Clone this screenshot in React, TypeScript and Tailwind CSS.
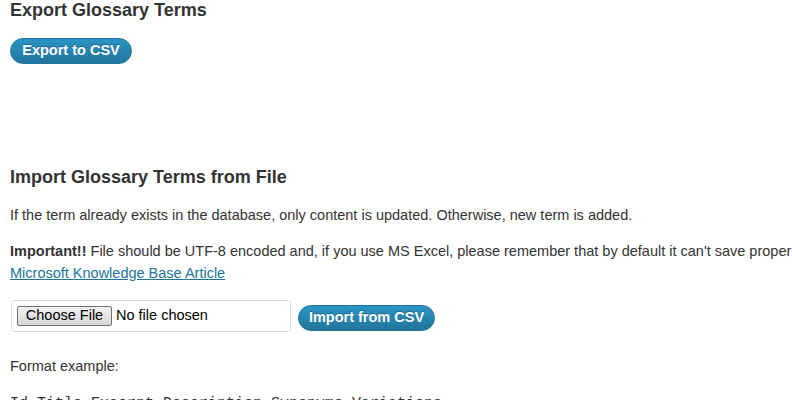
import React from "react";

export default function App() {
  return (
    <div className="w-[792px] h-[400px] overflow-hidden bg-white pl-[10px] font-['Liberation_Sans',Arial,sans-serif] text-[#333]">
      <h3 className="mt-[1px] text-[18px] leading-[18px] font-bold">Export Glossary Terms</h3>
      <button className="mt-[19px] flex h-[26px] w-[122px] items-center justify-center rounded-full border border-[#21759b] bg-gradient-to-b from-[#2a95c5] to-[#21759b] text-[14.5px] font-bold text-white [text-shadow:0_-1px_0_rgba(0,0,0,0.3)]">
        Export to CSV
      </button>
      <h3 className="mt-[104px] text-[18px] leading-[18px] font-bold">Import Glossary Terms from File</h3>
      <p className="mt-[18px] text-[14.5px] leading-[22px] whitespace-nowrap">
        If the term already exists in the database, only content is updated. Otherwise, new term is added.
      </p>
      <p className="mt-[14px] text-[14.5px] leading-[22px] whitespace-nowrap">
        <strong className="font-bold">Important!!</strong> File should be UTF-8 encoded and, if you use MS Excel, please remember that by default it can't save proper UTF-8 CSV files. Read more in
        <br />
        <a href="#" className="text-[#21759b] underline">Microsoft Knowledge Base Article</a>
      </p>
      <div className="mt-[16px] flex items-start">
        <div className="ml-[1px] flex h-[32px] w-[280px] items-center rounded-[3px] border border-[#dddddd] bg-white pl-[5px]">
          <span className="flex h-[20px] w-[95px] items-center justify-center rounded-[2px] border border-[#707070] bg-gradient-to-b from-[#f2f2f2] to-[#d6d6d6] text-[14.5px] text-black">
            Choose File
          </span>
          <span className="ml-[4px] text-[14.5px] text-black">No file chosen</span>
        </div>
        <button className="ml-[7px] mt-[5px] flex h-[26px] w-[137px] items-center justify-center rounded-full border border-[#21759b] bg-gradient-to-b from-[#2a95c5] to-[#21759b] text-[14.5px] font-bold text-white [text-shadow:0_-1px_0_rgba(0,0,0,0.3)]">
          Import from CSV
        </button>
      </div>
      <p className="mt-[23px] text-[14.5px] leading-[22px]">Format example:</p>
      <pre className="mt-[18px] font-['Liberation_Mono','Courier_New',monospace] text-[15px] leading-[18px] text-[#333]">
        Id,Title,Excerpt,Description,Synonyms,Variations
      </pre>
    </div>
  );
}
